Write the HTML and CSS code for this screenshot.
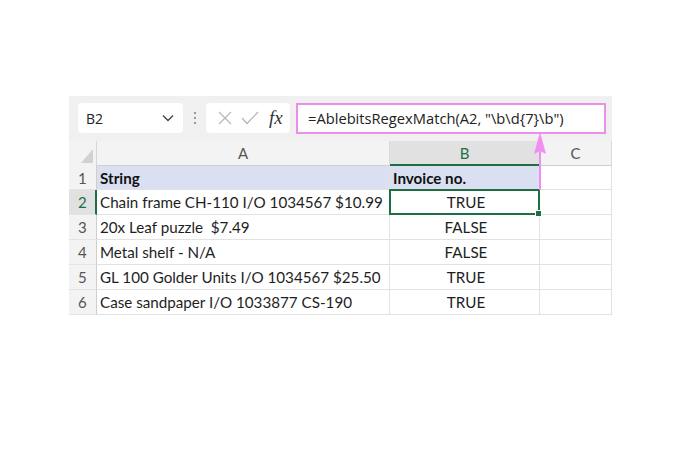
FILE: index.html
```html
<!DOCTYPE html>
<html lang="en">
<head>
    <meta charset="UTF-8">
    <meta name="viewport" content="width=device-width, initial-scale=1.0">
    <title>Regex Match</title>
    <link rel="stylesheet" href="styles.css">
</head>
<body>

    <div class="sheet">
        <div class="formula-bar">
            <div class="name-box">
                <span>B2</span>
                <svg width="12" height="8" viewBox="0 0 12 8"><path d="M1 1.5 L6 6.5 L11 1.5" fill="none" stroke="#444" stroke-width="1.4"/></svg>
            </div>
            <div class="dots"><i></i><i></i><i></i></div>
            <div class="fx-box">
                <svg width="16" height="16" viewBox="0 0 16 16"><path d="M2 2 L14 14 M14 2 L2 14" stroke="#b8b8b8" stroke-width="1.3"/></svg>
                <svg width="18" height="16" viewBox="0 0 18 16"><path d="M1 8 L6 13.5 L17 2" fill="none" stroke="#b8b8b8" stroke-width="1.3"/></svg>
                <span class="fx">fx</span>
            </div>
            <div class="formula">=AblebitsRegexMatch(A2, "\b\d{7}\b")</div>
        </div>

        <div class="grid">
            <div class="corner"></div>
            <div class="col-head">A</div>
            <div class="col-head active">B</div>
            <div class="col-head">C</div>

            <div class="row-head">1</div>
            <div class="cell head">String</div>
            <div class="cell head">Invoice no.</div>
            <div class="cell"></div>

            <div class="row-head active">2</div>
            <div class="cell">Chain frame CH-110 I/O 1034567 $10.99</div>
            <div class="cell center selected">TRUE</div>
            <div class="cell"></div>

            <div class="row-head">3</div>
            <div class="cell">20x Leaf puzzle&nbsp; $7.49</div>
            <div class="cell center">FALSE</div>
            <div class="cell"></div>

            <div class="row-head">4</div>
            <div class="cell">Metal shelf - N/A</div>
            <div class="cell center">FALSE</div>
            <div class="cell"></div>

            <div class="row-head">5</div>
            <div class="cell">GL 100 Golder Units I/O 1034567 $25.50</div>
            <div class="cell center">TRUE</div>
            <div class="cell"></div>

            <div class="row-head">6</div>
            <div class="cell">Case sandpaper I/O 1033877 CS-190</div>
            <div class="cell center">TRUE</div>
            <div class="cell"></div>
        </div>

        <!-- pink pointer from B1 up to the formula -->
        <svg class="pointer" width="14" height="60" viewBox="0 0 14 60">
            <path d="M7 2 L13 24 L7 21 L1 24 Z" fill="#f28ef2"/>
            <rect x="6" y="14" width="2" height="46" fill="#f28ef2"/>
        </svg>
    </div>

</body>
</html>
```

FILE: styles.css
```css
body {
    margin: 0;
    padding: 96px 0 0 69px;
    background: #fff;
    font-family: Lato, 'Open Sans', sans-serif;
}

.sheet {
    position: relative;
    width: 543px;
    background: #f0f0f0;
}

.formula-bar {
    display: flex;
    align-items: center;
    height: 44px;
    padding: 0 0 0 9px;
}

.name-box {
    display: flex;
    align-items: center;
    justify-content: space-between;
    width: 105px;
    height: 30px;
    box-sizing: border-box;
    padding: 0 9px 0 8px;
    background: #fff;
    border-radius: 4px;
    font-family: 'Open Sans', sans-serif;
    font-size: 14px;
    color: #222;
}

.dots {
    display: flex;
    flex-direction: column;
    gap: 3px;
    margin: 0 10px 0 11px;
}

.dots i {
    display: block;
    width: 2px;
    height: 2px;
    background: #999;
}

.fx-box {
    display: flex;
    align-items: center;
    gap: 8px;
    width: 84px;
    height: 30px;
    box-sizing: border-box;
    padding: 0 0 0 11px;
    background: #fff;
    border-radius: 4px;
}

.fx {
    font-family: 'Liberation Serif', serif;
    font-style: italic;
    font-size: 19px;
    color: #333;
    margin-left: 2px;
}

.formula {
    margin-left: 6px;
    width: 310px;
    height: 31px;
    box-sizing: border-box;
    padding: 0 0 0 10px;
    line-height: 27px;
    background: #fff;
    border: 2px solid #ea90ea;
    font-family: 'Open Sans', sans-serif;
    font-size: 14.7px;
    color: #222;
}

.grid {
    display: grid;
    grid-template-columns: 28px 293px 150px 72px;
    grid-template-rows: 25px 24px repeat(5, 25px);
    margin-top: 1px;
}

.corner {
    background: #f3f3f3;
    border-right: 1px solid #d6d6d6;
    position: relative;
}

.corner::after {
    content: "";
    position: absolute;
    right: 3px;
    bottom: 3px;
    border-left: 12px solid transparent;
    border-bottom: 14px solid #d2d2d2;
}

.col-head {
    display: flex;
    align-items: center;
    justify-content: center;
    background: #f3f3f3;
    border-right: 1px solid #dcdcdc;
    border-bottom: 1px solid #cfcfcf;
    font-size: 15px;
    color: #555;
}

.col-head.active {
    background: #e1e1e1;
    color: #1f6e45;
    border-bottom: 2px solid #1f6e45;
}

.row-head {
    display: flex;
    align-items: center;
    padding-left: 9px;
    background: #f3f3f3;
    border-right: 1px solid #cfcfcf;
    border-bottom: 1px solid #e4e4e4;
    font-size: 15px;
    color: #555;
}

.row-head.active {
    background: #e1e1e1;
    color: #1f6e45;
    border-right: 2px solid #1f6e45;
}

.cell {
    display: flex;
    align-items: center;
    padding-left: 3px;
    background: #fff;
    border-right: 1px solid #e2e2e2;
    border-bottom: 1px solid #e2e2e2;
    font-size: 15.2px;
    color: #1e1e1e;
    white-space: nowrap;
}

.cell.head {
    background: #dae0f1;
    font-weight: bold;
    color: #111;
}

.cell.center {
    justify-content: center;
}

.cell.selected {
    position: relative;
    border: 2px solid #1f6e45;
    margin: -1px 0 0 -1px;
}

.cell.selected::after {
    content: "";
    position: absolute;
    right: -4px;
    bottom: -4px;
    width: 5px;
    height: 5px;
    background: #1f6e45;
    border: 1px solid #fff;
}

.pointer {
    position: absolute;
    left: 464px;
    top: 34px;
}
```
